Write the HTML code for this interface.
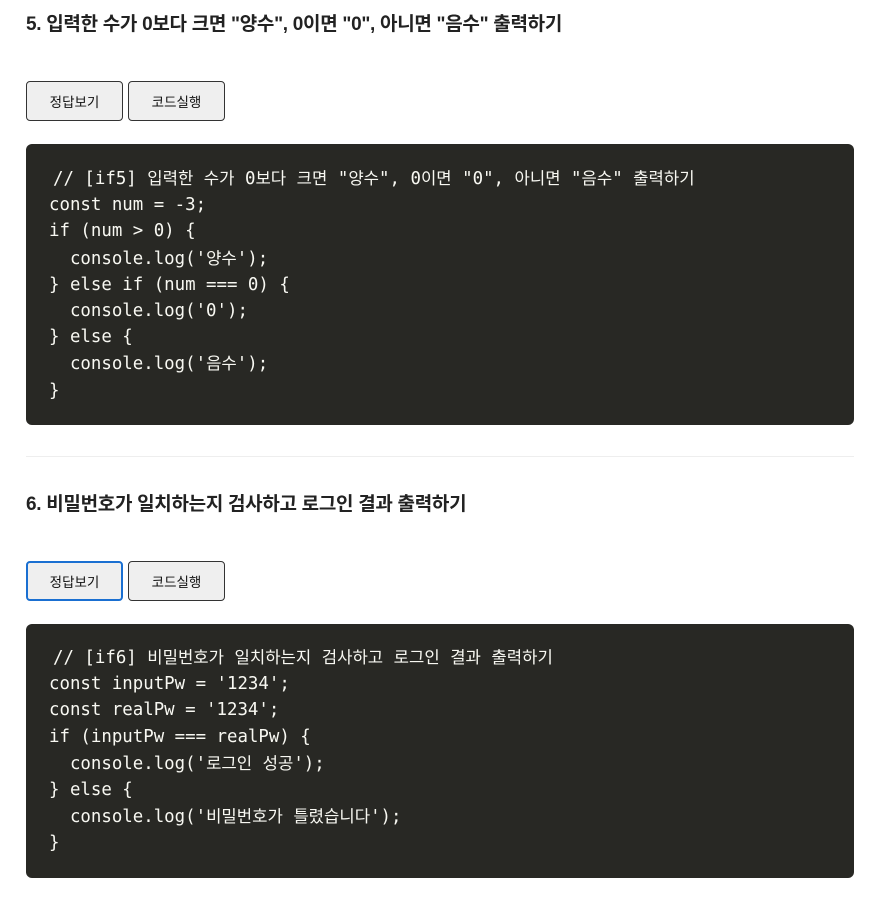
<!DOCTYPE html>
<html><head><meta charset="utf-8"><style>
body{margin:0;background:#fff;width:880px;height:907px;overflow:hidden;font-family:"Liberation Sans","Noto Sans CJK KR",sans-serif;color:#222}
h2{position:absolute;left:26px;margin:0;font-size:19px;font-weight:bold;line-height:24px;letter-spacing:-0.3px}
.btn{position:absolute;width:97px;height:40px;box-sizing:border-box;border:1px solid #333;border-radius:4px;background:#efefef;font-size:13.5px;display:flex;align-items:center;justify-content:center;color:#111}
.btn.f{border:2px solid #1a6fd1}
pre{position:absolute;left:26px;width:828px;margin:0;box-sizing:border-box;background:#282824;border-radius:6px;color:#f8f8f2;font-family:"DejaVu Sans Mono","Noto Sans CJK KR",monospace;font-size:17.4px;line-height:26.2px;padding:21px 23px 21px}
pre k{font-size:16.7px}
hr{position:absolute;left:26px;top:456px;width:828px;margin:0;border:0;border-top:1px solid #eee}
</style></head><body>
<h2 style="top:13px">5. 입력한 수가 0보다 크면 "양수", 0이면 "0", 아니면 "음수" 출력하기</h2>
<div class="btn" style="left:26px;top:81px">정답보기</div>
<div class="btn" style="left:128px;top:81px">코드실행</div>
<pre style="top:144px;height:281px"><span style="padding-left:4px">// [if5] <k>입력한</k> <k>수가</k> 0<k>보다</k> <k>크면</k> "<k>양수</k>", 0<k>이면</k> "0", <k>아니면</k> "<k>음수</k>" <k>출력하기</k></span>
const num = -3;
if (num > 0) {
  console.log('<k>양수</k>');
} else if (num === 0) {
  console.log('0');
} else {
  console.log('<k>음수</k>');
}</pre>
<hr>
<h2 style="top:493px">6. 비밀번호가 일치하는지 검사하고 로그인 결과 출력하기</h2>
<div class="btn f" style="left:26px;top:561px">정답보기</div>
<div class="btn" style="left:128px;top:561px">코드실행</div>
<pre style="top:624px;height:254px;padding-top:20px"><span style="padding-left:4px">// [if6] <k>비밀번호가</k> <k>일치하는지</k> <k>검사하고</k> <k>로그인</k> <k>결과</k> <k>출력하기</k></span>
const inputPw = '1234';
const realPw = '1234';
if (inputPw === realPw) {
  console.log('<k>로그인</k> <k>성공</k>');
} else {
  console.log('<k>비밀번호가</k> <k>틀렸습니다</k>');
}</pre>
</body></html>
